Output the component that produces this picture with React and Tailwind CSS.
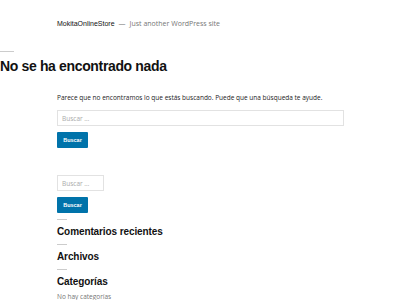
export default function App() {
  return (
    <div className="min-h-[300px] bg-white text-[#111] font-['Liberation_Sans',Arial,sans-serif] overflow-hidden">
      <header className="pt-[19px] pl-[57px] flex items-baseline text-[7px] leading-[10px]">
        <span className="text-[#111]">MokitaOnlineStore</span>
        <span className="text-[#767676] mx-[4px] font-['Open_Sans',sans-serif]">—</span>
        <span className="text-[#767676] font-['Open_Sans',sans-serif]">Just another WordPress site</span>
      </header>

      <main>
        <div className="mt-[22px] w-[14px] h-px bg-[#ccc]" />
        <h1 className="mt-[6px] text-[14px] leading-[17px] font-bold tracking-[-0.35px]">No se ha encontrado nada</h1>

        <div className="pl-[57px]">
          <p className="mt-[18px] text-[6.5px] leading-[10px] text-[#222] font-['Open_Sans',sans-serif]">
            Parece que no encontramos lo que estás buscando. Puede que una búsqueda te ayude.
          </p>
          <SearchForm className="mt-[7px] w-[287px]" />
        </div>
      </main>

      <aside className="pl-[57px] mt-[27px]">
        <SearchForm className="w-[47px]" />
        <Widget title="Comentarios recientes" />
        <Widget title="Archivos" />
        <Widget title="Categorías">
          <p className="mt-[4px] text-[6.5px] leading-[10px] text-[#767676] font-['Open_Sans',sans-serif]">No hay categorías</p>
        </Widget>
      </aside>
    </div>
  );
}

function SearchForm({ className }) {
  return (
    <form className="flex flex-col items-start">
      <input
        type="search"
        placeholder="Buscar …"
        className={`h-[16px] border border-[#e2e2e2] px-[4px] text-[6.5px] placeholder-[#aaa] font-['Open_Sans',sans-serif] outline-none ${className}`}
      />
      <button
        type="button"
        className="mt-[6px] w-[31px] h-[16px] bg-[#0073aa] text-white text-[5.5px] font-bold rounded-[1px]"
      >
        Buscar
      </button>
    </form>
  );
}

function Widget({ title, children }) {
  return (
    <section className="mt-[6px]">
      <div className="w-[10px] h-px bg-[#ccc]" />
      <h2 className="mt-[6px] text-[10px] leading-[12px] font-bold tracking-[-0.1px]">{title}</h2>
      {children}
    </section>
  );
}
